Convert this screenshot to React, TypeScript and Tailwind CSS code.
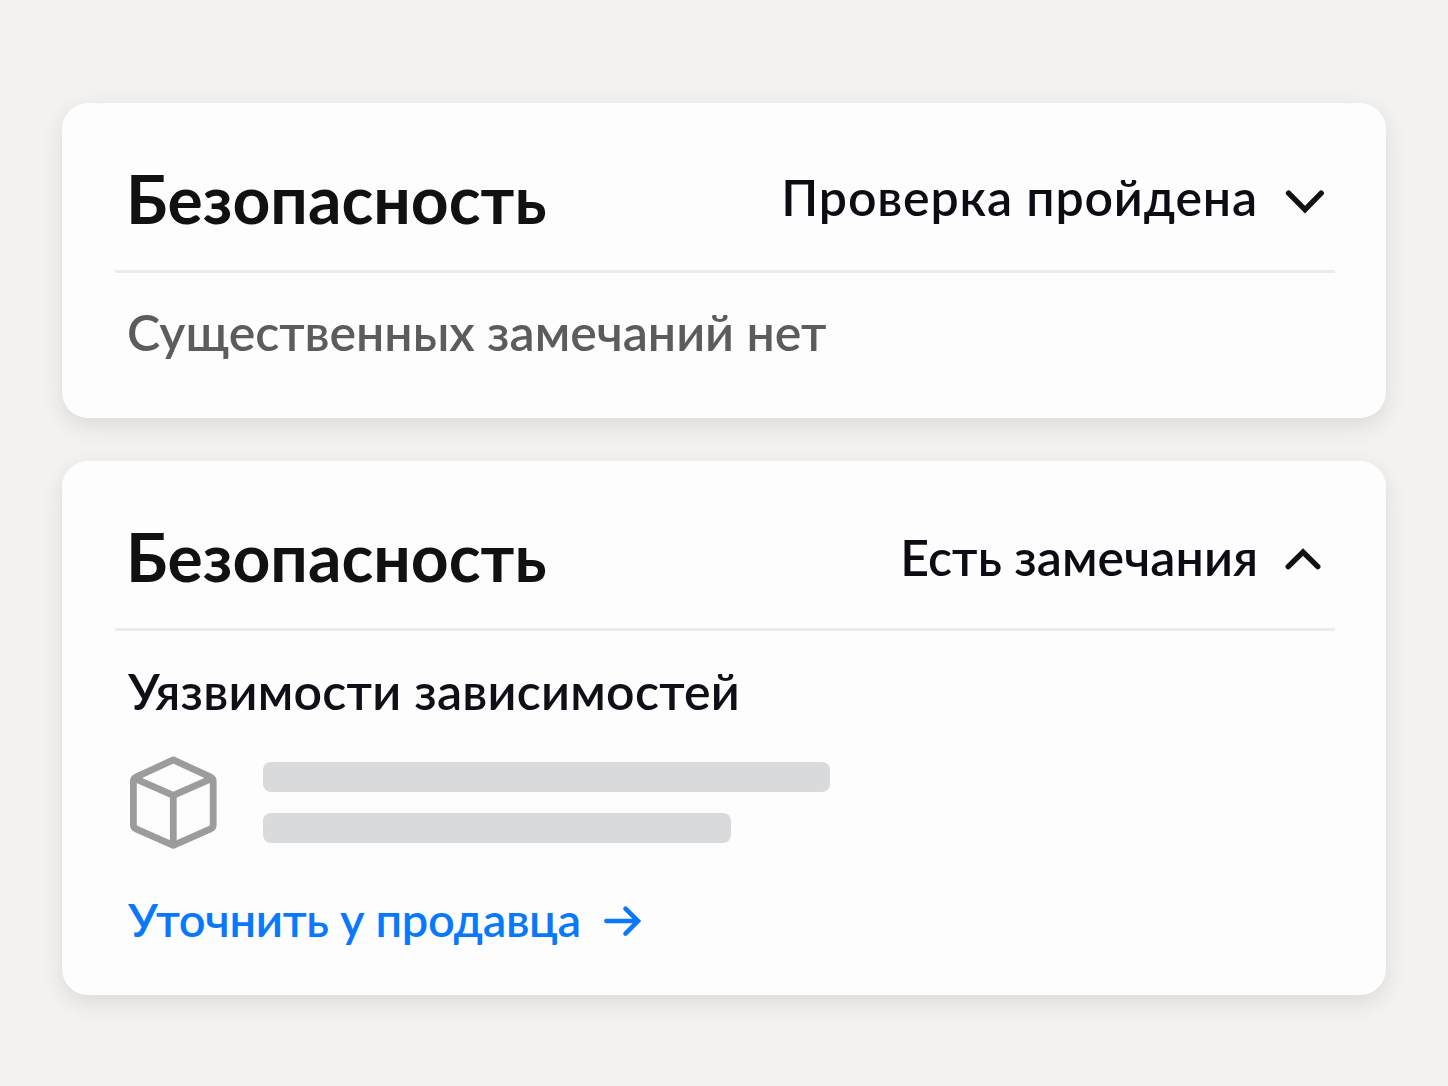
import React from "react";

interface SecurityCardProps {
  status: string;
  statusClassName: string;
  open?: boolean;
  className: string;
  children: React.ReactNode;
}

function Chevron({ open }: { open?: boolean }) {
  return (
    <svg
      width="40"
      height="26"
      viewBox="0 0 40 26"
      fill="none"
      stroke="#111111"
      strokeWidth="5.4"
      strokeLinecap="round"
      className="mt-[3px]"
    >
      {open ? <path d="M3.2 20.6 18 6 32.8 20.6" /> : <path d="M3.6 5.2 20 21.6 36.2 5.2" />}
    </svg>
  );
}

function PackageIcon() {
  return (
    <svg
      width="88"
      height="94"
      viewBox="0 0 88 94"
      fill="none"
      stroke="#9c9c9c"
      strokeWidth="6.8"
      strokeLinejoin="round"
    >
      <path d="M44.3 3.9 6.9 21.2Q4.4 22.5 4.4 25V69Q4.4 71.6 6.9 72.8L44.3 89.3 81.7 72.8Q84.2 71.6 84.2 69V25Q84.2 22.5 81.7 21.2Z" />
      <path d="M5.5 22.4 44.3 39.4 83 22.4M44.3 39.4V89" />
    </svg>
  );
}

function ArrowRight() {
  return (
    <svg
      width="38"
      height="32"
      viewBox="0 0 38 32"
      fill="none"
      stroke="currentColor"
      strokeWidth="4.6"
      strokeLinecap="round"
      className="mt-[3px]"
    >
      <path d="M2.4 16H34M21.5 3.6 34 16 21.5 28.6" />
    </svg>
  );
}

function SecurityCard({ status, statusClassName, open, className, children }: SecurityCardProps) {
  return (
    <section
      className={`rounded-[26px] bg-[#fdfdfd] pl-[53px] pr-[51px] shadow-[0_8px_22px_rgba(40,40,30,0.11)] ${className}`}
    >
      <header className="flex h-[170px] items-center justify-between border-b-[3px] border-[#ebebeb] pl-[11px] pr-[10px] pt-[26px]">
        <h2 className="-mt-[2px] whitespace-nowrap text-[66px] leading-none font-bold text-[#111112]">
          Безопасность
        </h2>
        <div className="flex items-center gap-[27px] text-[#0c0c14]">
          <span className={`whitespace-nowrap text-[50px] leading-none font-semibold ${statusClassName}`}>
            {status}
          </span>
          <Chevron open={open} />
        </div>
      </header>
      <div className="pl-[12px]">{children}</div>
    </section>
  );
}

export default function App() {
  return (
    <main className="flex h-[1086px] w-[1448px] flex-col gap-[43px] bg-[#f3f2f0] px-[62px] pt-[103px] font-['Lato',sans-serif]">
      <SecurityCard status="Проверка пройдена" statusClassName="-mt-[5px] tracking-[0.85px]" className="h-[315px]">
        <p className="pt-[34px] text-[50px] leading-none font-semibold tracking-[-0.03px] text-[#5c5c5d]">
          Существенных замечаний нет
        </p>
      </SecurityCard>

      <SecurityCard status="Есть замечания" statusClassName="-mt-[2px] tracking-[0.05px]" open className="h-[534px]">
        <h3 className="pl-px pt-[35px] text-[50px] leading-none font-semibold tracking-[0.25px] text-[#0f0f18]">
          Уязвимости зависимостей
        </h3>
        <div className="mt-[40px] flex items-center gap-[46px] pl-[2px]">
          <PackageIcon />
          <div className="-mt-[2px] flex flex-col gap-[21px]">
            <div className="h-[30px] w-[567px] rounded-[8px] bg-[#d9dadc]" />
            <div className="h-[30px] w-[468px] rounded-[8px] bg-[#d9dadc]" />
          </div>
        </div>
        <a href="#" className="mt-[46px] flex items-center gap-[23px] pl-px text-[#0a78fb]">
          <span className="text-[47px] leading-none font-semibold tracking-[-0.35px]">Уточнить у продавца</span>
          <ArrowRight />
        </a>
      </SecurityCard>
    </main>
  );
}
